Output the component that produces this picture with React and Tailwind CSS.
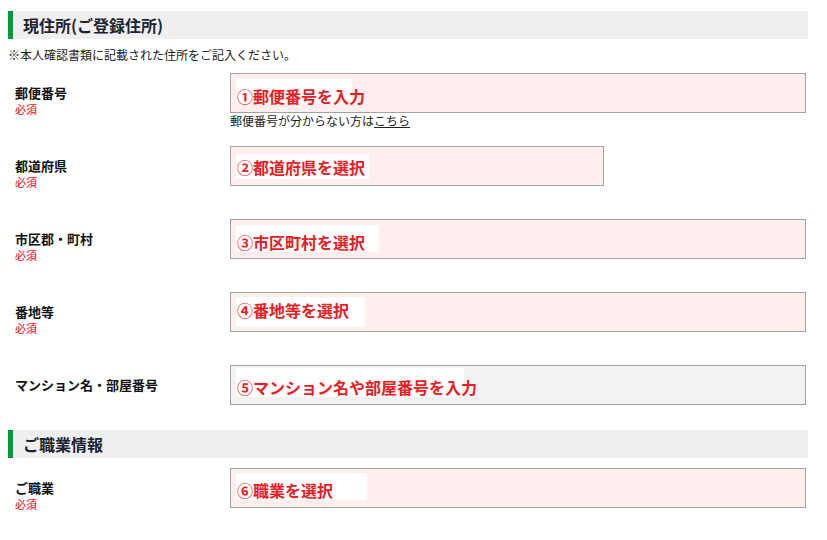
// 住所・職業入力フォーム（注釈付きスクリーンショット）

const FONT = { fontFamily: '"Noto Sans CJK JP", "Noto Sans", sans-serif' };

const ADDRESS_FIELDS = [
  { label: '郵便番号', required: true, hint: '①郵便番号を入力', boxW: 'w-[576px]', bg: 'bg-[#ffeeee]', rowH: 'h-[73px]', tag: 'mt-[5px] h-[25px] w-[116px] pt-[9px]', zip: true },
  { label: '都道府県', required: true, hint: '②都道府県を選択', boxW: 'w-[374px]', bg: 'bg-[#ffeeee]', rowH: 'h-[73px]', tag: 'mt-[7px] h-[25px] w-[133px] pt-[5px]' },
  { label: '市区郡・町村', required: true, hint: '③市区町村を選択', boxW: 'w-[576px]', bg: 'bg-[#ffeeee]', rowH: 'h-[73px]', tag: 'mt-[5px] h-[27px] w-[143px] pt-[9px]' },
  { label: '番地等', required: true, hint: '④番地等を選択', boxW: 'w-[576px]', bg: 'bg-[#ffeeee]', rowH: 'h-[73px]', tag: 'mt-[4px] h-[30px] w-[129px] pt-[5px]' },
  { label: 'マンション名・部屋番号', required: false, hint: '⑤マンション名や部屋番号を入力', boxW: 'w-[576px]', bg: 'bg-[#f2f2f2]', rowH: 'h-[65px]', tag: 'mt-[2px] h-[29px] w-[228px] pt-[11px]' },
];

const JOB_FIELD = { label: 'ご職業', required: true, hint: '⑥職業を選択', boxW: 'w-[576px]', bg: 'bg-[#ffeeee]', rowH: 'h-[72px]', tag: 'mt-[4px] h-[27px] w-[131px] pt-[9px]' };

export default function App() {
  return (
    <div className="min-h-[540px] w-[827px] bg-white" style={FONT}>
      <div className="ml-[8px] w-[800px] pt-[11px]">
        <SectionHeader title="現住所(ご登録住所)" />

        <p className="mt-[10px] text-[12px] leading-none text-[#222]">
          ※本人確認書類に記載された住所をご記入ください。
        </p>

        <div className="mt-[12px]">
          {ADDRESS_FIELDS.map(field => (
            <FieldRow key={field.label} field={field} />
          ))}
        </div>

        <SectionHeader title="ご職業情報" />

        <div className="mt-[10px]">
          <FieldRow field={JOB_FIELD} />
        </div>
      </div>
    </div>
  );
}

function SectionHeader({ title }) {
  return (
    <div className="flex h-[28px] items-center border-l-[5px] border-[#009a3e] bg-[#efefef] pl-[10px]">
      <h2 className="text-[16px] font-bold leading-none text-[#1c2230]">{title}</h2>
    </div>
  );
}

function FieldRow({ field }) {
  return (
    <div className={`flex ${field.rowH}`}>
      {/* Label column */}
      <div className="w-[222px] shrink-0 pl-[7px] pt-[13px]">
        <div className="text-[13px] font-bold leading-none text-[#111]">{field.label}</div>
        {field.required && (
          <div className="mt-[5px] text-[11px] leading-none text-[#ff0000]">必須</div>
        )}
      </div>

      {/* Input column */}
      <div className="flex-1">
        <div className={`flex h-[40px] items-start border border-[#a3a3a3] pl-[5px] ${field.boxW} ${field.bg}`}>
          <span className={`block whitespace-nowrap bg-white pl-[1px] text-[16px] font-bold leading-none text-[#ec1c24] ${field.tag}`}>
            {field.hint}
          </span>
        </div>
        {field.zip && (
          <div className="mt-[2px] text-[12px] leading-none text-[#222]">
            郵便番号が分からない方は<span className="underline">こちら</span>
          </div>
        )}
      </div>
    </div>
  );
}
